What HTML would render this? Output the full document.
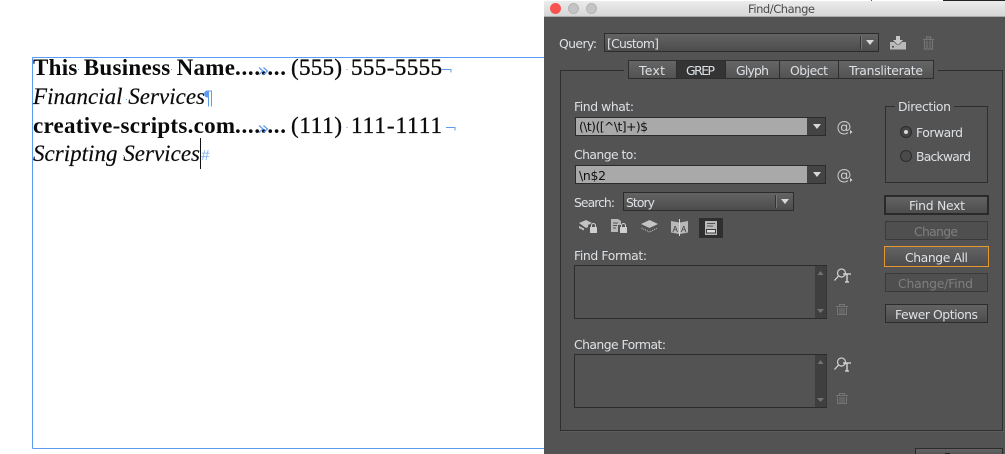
<!DOCTYPE html>
<html>
<head>
<meta charset="utf-8">
<title>Find/Change</title>
<style>
html,body{margin:0;padding:0;background:#fff;width:1005px;height:454px;overflow:hidden}
svg{display:block}
.ui{font-family:"DejaVu Sans",sans-serif;font-size:12.4px;fill:#dde1e5}
.dis{fill:#7f7f7f}
.fld{fill:#111}
.b{font-family:"Liberation Serif",serif;font-weight:bold;font-size:23px;fill:#0a0a0a}
.n{font-family:"Liberation Serif",serif;font-size:23px;fill:#0a0a0a;stroke:#0a0a0a;stroke-width:.35px}
.i{font-family:"Liberation Serif",serif;font-style:italic;font-size:23px;fill:#0a0a0a;stroke:#0a0a0a;stroke-width:.15px}
.blue{font-family:"Liberation Sans",sans-serif;fill:#5b9bf0}
</style>
</head>
<body>
<svg width="1005" height="454" viewBox="0 0 1005 454" xmlns="http://www.w3.org/2000/svg">
<defs>
<linearGradient id="tb" x1="0" y1="0" x2="0" y2="1"><stop offset="0" stop-color="#ececec"/><stop offset="1" stop-color="#d6d6d6"/></linearGradient>
<linearGradient id="btn" x1="0" y1="0" x2="0" y2="1"><stop offset="0" stop-color="#646464"/><stop offset="1" stop-color="#4c4c4c"/></linearGradient>
<linearGradient id="tab" x1="0" y1="0" x2="0" y2="1"><stop offset="0" stop-color="#666"/><stop offset="1" stop-color="#525252"/></linearGradient>
</defs>

<!-- text frame -->
<path d="M32.5 448.5V57.5H544M32.5 448.5H544" fill="none" stroke="#5b9bf0" stroke-width="1"/>

<!-- document text -->
<text class="b" x="33" y="75" textLength="202">This Business Name</text>
<text class="b" x="235" y="75" textLength="51">........</text>
<path d="M259 67.500L263 71L259 74.500M263.500 67.500L267.500 71L263.500 74.500" fill="none" stroke="#5b9bf0" stroke-width="1.200"/>
<text class="n" x="291" y="75" textLength="51">(555)</text>
<text class="n" x="351" y="75" textLength="91">555-5555</text>
<path d="M441 69.500H451V72.500" fill="none" stroke="#5b9bf0"/>
<path d="M78 69h1v1h-1zM171 69h1v1h-1zM346.500 69h1v1h-1z" fill="#5b9bf0"/>

<text class="i" x="33" y="104" textLength="172">Financial Services</text>
<path d="M208.500 91H211.500V106.500M208.500 91V106.500" fill="none" stroke="#5b9bf0"/>
<path d="M204 94a3.500 3.500 0 0 1 3.500-3.500h1.500v7h-1.500a3.500 3.500 0 0 1-3.500-3.500z" fill="#5b9bf0"/>
<path d="M126 99h1v1h-1z" fill="#5b9bf0"/>

<text class="b" x="33" y="133" textLength="202">creative-scripts.com</text>
<text class="b" x="235" y="133" textLength="51">........</text>
<path d="M259 125.500L263 129L259 132.500M263.500 125.500L267.500 129L263.500 132.500" fill="none" stroke="#5b9bf0" stroke-width="1.200"/>
<text class="n" x="291" y="133" textLength="51">(111)</text>
<text class="n" x="351" y="133" textLength="91">111-1111</text>
<path d="M446 127.500H455V130.500" fill="none" stroke="#5b9bf0"/>
<path d="M346.500 127h1v1h-1z" fill="#5b9bf0"/>

<text class="i" x="33" y="161" textLength="167">Scripting Services</text>
<rect x="200" y="138" width="1" height="31" fill="#111"/>
<text class="blue" x="201" y="160" font-size="15" font-style="italic" fill-opacity=".8">#</text>
<path d="M123 155h1v1h-1z" fill="#5b9bf0"/>

<!-- stray top edge pixels -->
<rect x="871" y="0" width="1" height="1" fill="#7a3fb0"/>
<rect x="943" y="0" width="62" height="1" fill="#222"/>

<!-- window -->
<rect x="544" y="1" width="461" height="453" fill="#535353"/>
<rect x="544" y="1" width="461" height="15" fill="url(#tb)"/>
<rect x="544" y="16" width="461" height="1" fill="#a8a8a8"/>
<circle cx="555.500" cy="8.500" r="5.500" fill="#f9534f"/>
<circle cx="573.500" cy="8.500" r="5" fill="#c4c4c4" stroke="#b4b4b4"/>
<circle cx="591.500" cy="8.500" r="5" fill="#c4c4c4" stroke="#b4b4b4"/>
<text x="748" y="13" font-family="DejaVu Sans,sans-serif" font-size="11.500" fill="#4a4a4a" textLength="67">Find/Change</text>

<!-- query -->
<text class="ui" x="559" y="48" textLength="38">Query:</text>
<rect x="604.500" y="33.500" width="274" height="18" fill="url(#btn)" stroke="#2c2c2c"/>
<rect x="860" y="36" width="1" height="13" fill="#333"/>
<rect x="861" y="36" width="1" height="13" fill="#777"/>
<path d="M866 40H874L870 45Z" fill="#d8d8d8"/>
<text class="ui" x="607" y="48" textLength="52">[Custom]</text>

<g fill="#c8c8c8">
<path d="M896 36h4v4h3l-5 5-5-5h3z"/>
<path d="M890 42h4l3 3h2l3-3h4v7.500h-16z" fill="#b9b9b9"/>
<rect x="892" y="46" width="2" height="1.500" fill="#4c4c4c"/>
</g>
<g fill="none" stroke="#757575" stroke-width="1.200">
<path d="M923 39.500H934M926.500 39V37H930.500V39"/>
<path d="M924.500 40.500V49H932.500V40.500M927 41V48M930 41V48"/>
</g>

<!-- group box -->
<path d="M624 70.500H560.500V430.500H1002.500V70.500H938" fill="none" stroke="#2e2e2e"/>
<path d="M561.500 431.500H1003.500V71" fill="none" stroke="#5c5c5c"/>

<!-- tabs -->
<rect x="628.500" y="60.500" width="305" height="18" fill="url(#tab)" stroke="#2e2e2e"/>
<rect x="676" y="61" width="49" height="17" fill="#343434"/>
<path d="M676.500 61V78M725.500 61V78M779.500 61V78M838.500 61V78" stroke="#2e2e2e"/>
<text class="ui" x="639" y="75" textLength="26">Text</text>
<text class="ui" x="686" y="75" textLength="29">GREP</text>
<text class="ui" x="736" y="75" textLength="33">Glyph</text>
<text class="ui" x="790" y="75" textLength="38">Object</text>
<text class="ui" x="849" y="75" textLength="74">Transliterate</text>

<!-- find what -->
<text class="ui" x="574" y="111" textLength="60">Find what:</text>
<rect x="575.500" y="117.500" width="250" height="18" fill="#444" stroke="#2c2c2c"/>
<rect x="576" y="118" width="231" height="17" fill="#a9a9a9"/>
<path d="M813 124H821L817 129Z" fill="#d8d8d8"/>
<text class="ui fld" x="579" y="131" textLength="69">(\t)([^\t]+)$</text>
<text x="836.500" y="132" font-family="DejaVu Sans,sans-serif" font-size="15" fill="#c8c8c8">@</text>
<path d="M850 130V134L852.500 132Z" fill="#d8d8d8"/>

<!-- change to -->
<text class="ui" x="574" y="159" textLength="63">Change to:</text>
<rect x="575.500" y="165.500" width="250" height="18" fill="#444" stroke="#2c2c2c"/>
<rect x="576" y="166" width="231" height="17" fill="#a9a9a9"/>
<path d="M813 172H821L817 177Z" fill="#d8d8d8"/>
<text class="ui fld" x="579" y="180" textLength="27">\n$2</text>
<text x="836.500" y="180" font-family="DejaVu Sans,sans-serif" font-size="15" fill="#c8c8c8">@</text>
<path d="M850 178V182L852.500 180Z" fill="#d8d8d8"/>

<!-- search -->
<text class="ui" x="574" y="207" textLength="41">Search:</text>
<rect x="623.500" y="192.500" width="170" height="18" fill="url(#btn)" stroke="#2c2c2c"/>
<rect x="775" y="195" width="1" height="13" fill="#333"/>
<rect x="776" y="195" width="1" height="13" fill="#777"/>
<path d="M781 199H789L785 204Z" fill="#d8d8d8"/>
<text class="ui" x="626" y="207" textLength="29">Story</text>

<!-- option icons -->
<g fill="#c4c4c4">
<path d="M579 223l7-3 6 3-4 2v2l-2 1zM579 226l5 2.500v2l-5-2.500z"/>
<rect x="590" y="227" width="7" height="6" rx=".5" fill="#d0d0d0"/>
<path d="M591.500 227v-1.500a2 2 0 0 1 4 0V227" fill="none" stroke="#d0d0d0"/>
<path d="M611 219h7l3 2v4h-3v7h-7z" fill="#b8b8b8"/>
<path d="M613 223h5M613 225.500h4M613 228h3" stroke="#535353" fill="none"/>
<rect x="620" y="227" width="7" height="6" rx=".5" fill="#d0d0d0"/>
<path d="M621.500 227v-1.500a2 2 0 0 1 4 0V227" fill="none" stroke="#d0d0d0"/>
<path d="M641 224l8.500-4 8.500 4-8.500 4z"/>
<path d="M641.500 228l8 4 8-4" fill="none" stroke="#c4c4c4" stroke-dasharray="1 1"/>
<path d="M671 221l8 1.500V234l-8-1.500zM688 221l-8 1.500V234l8-1.500z" fill="#b8b8b8"/>
<path d="M679.500 219V236" stroke="#d8d8d8" fill="none"/>
</g>
<text x="672.500" y="232" font-family="Liberation Sans,sans-serif" font-size="8" fill="#333">A</text>
<text x="681" y="232" font-family="Liberation Sans,sans-serif" font-size="8" fill="#333">A</text>
<rect x="699" y="218" width="24" height="20" fill="#2f2f2f"/>
<rect x="705" y="221" width="12" height="14" fill="#b9b9b9"/>
<path d="M707 223.500h8M707 226h6" stroke="#555" fill="none"/>
<rect x="706.500" y="229.500" width="9" height="3.500" fill="#e2e2e2" stroke="#3a3a3a"/>

<!-- find format -->
<text class="ui" x="574" y="260" textLength="73">Find Format:</text>
<rect x="574.500" y="265.500" width="252" height="53" fill="#535353" stroke="#2c2c2c"/>
<rect x="815" y="266" width="11.500" height="52" fill="#3f3f3f"/>
<path d="M817.500 275L820.500 271L823.500 275Z" fill="#737373"/>
<path d="M817 309H824L820.500 313Z" fill="#737373"/>
<g>
<circle cx="841.500" cy="273" r="4" fill="none" stroke="#cfcfcf" stroke-width="1.200"/>
<path d="M838.500 276L834.500 280.500" stroke="#dcdcdc" stroke-width="1.200"/>
<path d="M843 274H851M847 274V282M845 282H849" stroke="#e0e0e0" stroke-width="1.300" fill="none"/>
</g>
<g fill="none" stroke="#757575">
<path d="M836 306.500H848M839.500 306V304.500H844.500V306"/>
<path d="M837.500 307.500V314.500H846.500V307.500M840 308V314M842 308V314M844 308V314"/>
</g>

<!-- change format -->
<text class="ui" x="574" y="349" textLength="92">Change Format:</text>
<rect x="574.500" y="354.500" width="252" height="53" fill="#535353" stroke="#2c2c2c"/>
<rect x="815" y="355" width="11.500" height="52" fill="#3f3f3f"/>
<path d="M817.500 364L820.500 360L823.500 364Z" fill="#737373"/>
<path d="M817 398H824L820.500 402Z" fill="#737373"/>
<g>
<circle cx="841.500" cy="362" r="4" fill="none" stroke="#cfcfcf" stroke-width="1.200"/>
<path d="M838.500 365L834.500 369.500" stroke="#dcdcdc" stroke-width="1.200"/>
<path d="M843 363H851M847 363V371M845 371H849" stroke="#e0e0e0" stroke-width="1.300" fill="none"/>
</g>
<g fill="none" stroke="#757575">
<path d="M836 395.500H848M839.500 395V393.500H844.500V395"/>
<path d="M837.500 396.500V403.500H846.500V396.500M840 397V403M842 397V403M844 397V403"/>
</g>

<!-- direction -->
<path d="M895 106.500H885.500V182.500H987.500V106.500H954" fill="none" stroke="#2e2e2e"/>
<text class="ui" x="898" y="111" textLength="53">Direction</text>
<circle cx="906" cy="132" r="5.500" fill="#454545" stroke="#2c2c2c"/>
<circle cx="906" cy="132" r="2" fill="#d8d8d8"/>
<text class="ui" x="916" y="137" textLength="47">Forward</text>
<circle cx="906" cy="156" r="5.500" fill="#4a4a4a" stroke="#2c2c2c"/>
<text class="ui" x="916" y="161" textLength="55">Backward</text>

<!-- buttons -->
<rect x="885" y="196" width="103" height="18" fill="url(#btn)" stroke="#2a2a2a" stroke-width="2"/>
<text class="ui" x="909" y="210" textLength="56">Find Next</text>
<rect x="885.500" y="221.500" width="102" height="18" fill="#4f4f4f" stroke="#3a3a3a"/>
<text class="ui dis" x="914" y="236" textLength="44">Change</text>
<rect x="884.500" y="246.500" width="104" height="20" fill="url(#btn)" stroke="#e8962e"/>
<text class="ui" x="905" y="262" textLength="63">Change All</text>
<rect x="885.500" y="273.500" width="102" height="18" fill="#4f4f4f" stroke="#3a3a3a"/>
<text class="ui dis" x="898" y="288" textLength="75">Change/Find</text>
<rect x="885.500" y="304.500" width="102" height="18" fill="url(#btn)" stroke="#2c2c2c"/>
<text class="ui" x="895" y="319" textLength="83">Fewer Options</text>

<!-- bottom clipped button -->
<rect x="915.500" y="448.500" width="87" height="10" fill="url(#btn)" stroke="#2c2c2c"/>
<rect x="945" y="453" width="5" height="1" fill="#222"/>
</svg>
</body>
</html>
